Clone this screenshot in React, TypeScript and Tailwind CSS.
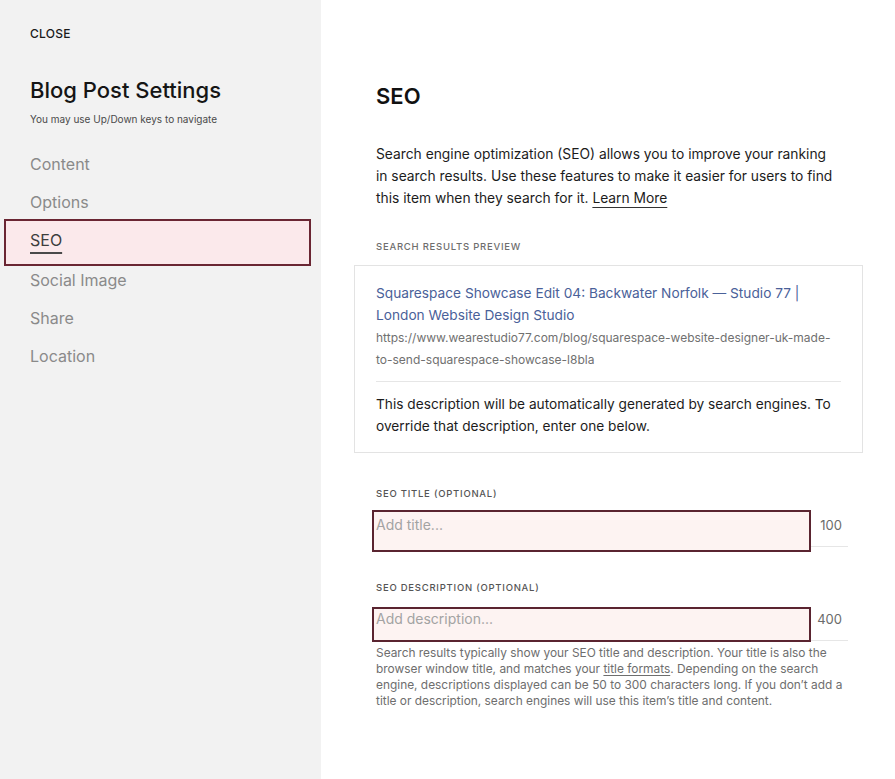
import React from "react";

const font = { fontFamily: "Inter, 'Noto Sans', sans-serif" };

function InputRow({ placeholder, count, h, ringH, pt }: { placeholder: string; count: string; h: string; ringH: string; pt: string }) {
  return (
    <div className={`relative flex w-[472px] border-b border-[#e6e6e6] ${h}`}>
      <div className={`pointer-events-none absolute left-[-4px] top-0 w-[439px] border-2 border-[#5a2430] bg-[#fdf3f2] ${ringH}`} />
      <div className={`relative flex-1 text-[14px] leading-[20px] text-[#a3a3a3] ${pt}`}>{placeholder}</div>
      <div className={`relative pr-[6px] text-[13px] leading-[20px] text-[#6b6b6b] ${pt}`}>{count}</div>
    </div>
  );
}

export default function App() {
  const nav = ["Content", "Options", "SEO", "Social Image", "Share", "Location"];
  return (
    <div style={font} className="flex h-[779px] w-[895px] overflow-hidden bg-white antialiased">
      <aside className="w-[321px] shrink-0 bg-[#f2f2f2] pt-[26px]">
        <div className="pl-[30px] text-[12px] font-medium leading-[16px] tracking-[0.02em] text-[#1a1a1a]">CLOSE</div>
        <h1 className="mt-[34px] pl-[30px] text-[22px] font-medium leading-[28px] text-[#151515]">Blog Post Settings</h1>
        <div className="mt-[8px] pl-[30px] text-[10px] leading-[14px] text-[#4a4a4a]">You may use Up/Down keys to navigate</div>
        <nav className="mt-[19px]">
          {nav.map((n) => (
            <div key={n} className={`relative flex items-center pl-[30px] ${n === "SEO" ? "h-[40px] pb-[2px]" : "h-[38px]"}`}>
              {n === "SEO" && (
                <div className="absolute left-[4px] top-[-2px] h-[47px] w-[307px] border-2 border-[#6a2633] bg-[#fbe9eb]" />
              )}
              <span
                className={`relative text-[16px] leading-[22px] ${
                  n === "SEO" ? "text-[#3d3d3d] underline decoration-[#4a4a4a] decoration-2 underline-offset-[6px]" : "text-[#8a8a8a]"
                }`}
              >
                {n}
              </span>
            </div>
          ))}
        </nav>
      </aside>
      <main className="flex-1 pl-[55px] pt-[82px]">
        <h2 className="text-[22px] font-semibold leading-[28px] text-[#111]">SEO</h2>
        <p className="mt-[33px] w-[460px] text-[13.8px] leading-[22px] text-[#1c1c1c]">
          Search engine optimization (SEO) allows you to improve your ranking in search results. Use these features to make it easier for users to find this item when they search for it.{" "}
          <span className="underline decoration-[#333] underline-offset-[4px]">Learn More</span>
        </p>
        <div className="mt-[31px] text-[9.5px] font-medium leading-[14px] tracking-[0.08em] text-[#6e6e6e]">SEARCH RESULTS PREVIEW</div>
        <div className="ml-[-22px] mt-[11px] w-[509px] border border-[#e3e3e3] px-[21px] pb-[15px] pt-[16px]">
          <div className="text-[13.7px] leading-[22px] text-[#4a6199]">
            Squarespace Showcase Edit 04: Backwater Norfolk — Studio 77 | London Website Design Studio
          </div>
          <div className="mt-[1px] text-[12px] leading-[22px] text-[#707070]">
            https://www.wearestudio77.com/blog/squarespace-website-designer-uk-made-to-send-squarespace-showcase-l8bla
          </div>
          <div className="mt-[10px] border-t border-[#e6e6e6]" />
          <div className="mt-[11px] text-[13.7px] leading-[22px] text-[#1c1c1c]">
            This description will be automatically generated by search engines. To override that description, enter one below.
          </div>
        </div>
        <div className="mt-[34px] text-[9.5px] font-medium leading-[14px] tracking-[0.08em] text-[#555]">SEO TITLE (OPTIONAL)</div>
        <div className="mt-[9px]">
          <InputRow placeholder="Add title..." count="100" h="h-[37px]" ringH="h-[42px]" pt="pt-[5px]" />
        </div>
        <div className="mt-[34px] text-[9.5px] font-medium leading-[14px] tracking-[0.08em] text-[#555]">SEO DESCRIPTION (OPTIONAL)</div>
        <div className="mt-[12px]">
          <InputRow placeholder="Add description..." count="400" h="h-[34px]" ringH="h-[35px]" pt="pt-[2px]" />
        </div>
        <p className="mt-[4px] w-[468px] text-[11.9px] leading-[16px] text-[#6e6e6e]">
          Search results typically show your SEO title and description. Your title is also the browser window title, and matches your{" "}
          <span className="underline underline-offset-[2px]">title formats</span>. Depending on the search engine, descriptions displayed can be 50 to 300 characters long. If you don’t add a title or description, search engines will use this item’s title and content.
        </p>
      </main>
    </div>
  );
}
